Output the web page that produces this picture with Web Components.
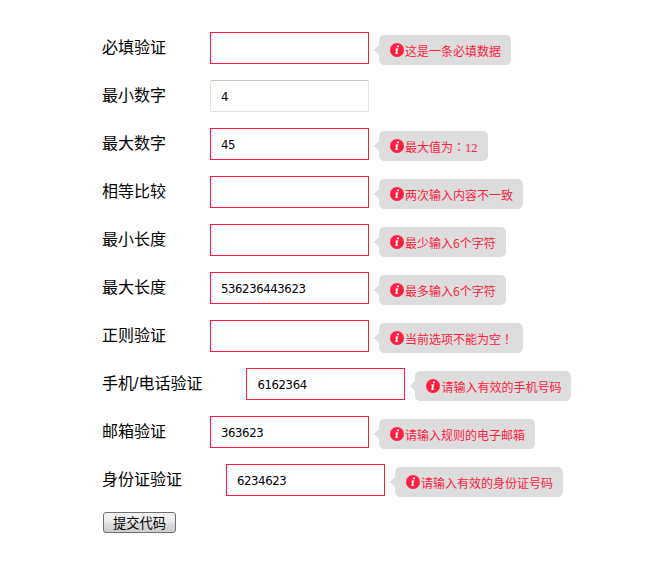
<!DOCTYPE html>
<html lang="zh"><head><meta charset="utf-8"><title>表单验证</title>
<style>
html,body{ margin:0; padding:0; background:#fff; }
body{ font-family:"Noto Sans CJK SC",sans-serif; }
.tc{ font-family:"Noto Sans CJK TC",sans-serif; }
</style></head><body>
<valid-form>
	<form-row label="必填验证" invalid>这是一条必填数据</form-row>
	<form-row label="最小数字" value="4"></form-row>
	<form-row label="最大数字" value="45" invalid>最大值为<span class="tc" lang="zh-TW">：</span><span style="font-family:'Liberation Serif',serif;font-size:12.5px">12</span></form-row>
	<form-row label="相等比较" invalid>两次输入内容不一致</form-row>
	<form-row label="最小长度" invalid>最少输入6个字符</form-row>
	<form-row label="最大长度" value="536236443623" invalid>最多输入6个字符</form-row>
	<form-row label="正则验证" invalid>当前选项不能为空<span class="tc" lang="zh-TW">！</span></form-row>
	<form-row label="手机/电话验证" value="6162364" invalid>请输入有效的手机号码</form-row>
	<form-row label="邮箱验证" value="363623" invalid>请输入规则的电子邮箱</form-row>
	<form-row label="身份证验证" value="6234623" invalid>请输入有效的身份证号码</form-row>
</valid-form>
<script>
class ErrTip extends HTMLElement{
	constructor(){
		super();
		this.attachShadow({mode:"open"}).appendChild( ErrTip.Template.content.cloneNode(true) );
	}
}
ErrTip.Template = document.createElement("template");
ErrTip.Template.innerHTML = `<style>
	:host{ display:flex; align-items:center; position:relative; height:30px; margin:3px 0 0 10px; padding:0 10px 0 11px; border-radius:5px;
		background:#dddddd; color:#ff2040; font:12px/30px "Liberation Serif","Noto Sans CJK SC",serif; white-space:nowrap; }
	:host::before{ content:""; position:absolute; left:-5px; top:10px; border:5px solid transparent; border-left:0; border-right-color:#dddddd; }
	svg{ width:14px; height:14px; flex:none; margin-top:-1px; }
	span{ margin-left:1px; padding-top:2px; font-family:"Noto Sans CJK SC",sans-serif; }
</style><svg viewBox="0 0 14 14"><circle cx="7" cy="7" r="7" fill="#ff2040"/><path fill="#fff" d="M7.2 2.6h1.9l-.4 1.7h-1.9zM5.4 5.6l2.8-.3-1 4.3q-.1.5.3.4l.7-.4.2.4q-1.2 1.2-2.3 1.2-1 0-.8-1.1l.7-3.2q.1-.6-.6-.5z"/></svg><span><slot></slot></span>`;
customElements.define("err-tip", ErrTip);

class FormRow extends HTMLElement{
	constructor(){
		super();
		this.attachShadow({mode:"open"}).appendChild( FormRow.Template.content.cloneNode(true) );
	}
	connectedCallback(){
		let s = this.shadowRoot;
		s.querySelector("label").textContent = this.getAttribute("label");
		let inp = s.querySelector("input");
		inp.setAttribute("value", this.getAttribute("value") || "");
		inp.classList.toggle("bad", this.hasAttribute("invalid"));
		s.querySelector("err-tip").hidden = !this.hasAttribute("invalid");
	}
}
FormRow.Template = document.createElement("template");
FormRow.Template.innerHTML = `<style>
	:host{ display:flex; align-items:flex-start; height:32px; margin-bottom:16px; }
	label{ padding-right:44px; color:#000; font:16px/32px "Liberation Sans","Noto Sans CJK SC",sans-serif; white-space:nowrap; }
	input{ box-sizing:border-box; width:159px; height:32px; margin:0; padding:1px 10px 0; border:1px solid #dfe1e8; border-top-color:#c4c4c8; border-radius:2px;
		background:#fff; color:#000; font:11.7px "DejaVu Sans",sans-serif; letter-spacing:-.4px; outline:0; }
	input.bad{ border:1px solid #ff2040; border-radius:0; }
	err-tip[hidden]{ display:none; }
</style><label></label><input type="text"><err-tip><slot></slot></err-tip>`;
customElements.define("form-row", FormRow);

class ValidForm extends HTMLElement{
	constructor(){
		super();
		this.attachShadow({mode:"open"}).appendChild( ValidForm.Template.content.cloneNode(true) );
	}
}
ValidForm.Template = document.createElement("template");
ValidForm.Template.innerHTML = `<style>
	:host{ display:block; padding:32px 0 0 102px; }
	button{ display:block; box-sizing:border-box; width:73px; height:21px; margin:1px 0 0 1px; padding:0; border:1px solid #707070; border-radius:3px;
		background:linear-gradient(#f2f2f2 0,#ebebeb 48%,#dddddd 52%,#cfcfcf 100%); color:#000; font:13.3px/19px "Noto Sans CJK SC",sans-serif; }
</style><slot></slot><button type="button">提交代码</button>`;
customElements.define("valid-form", ValidForm);
</script>
</body></html>
